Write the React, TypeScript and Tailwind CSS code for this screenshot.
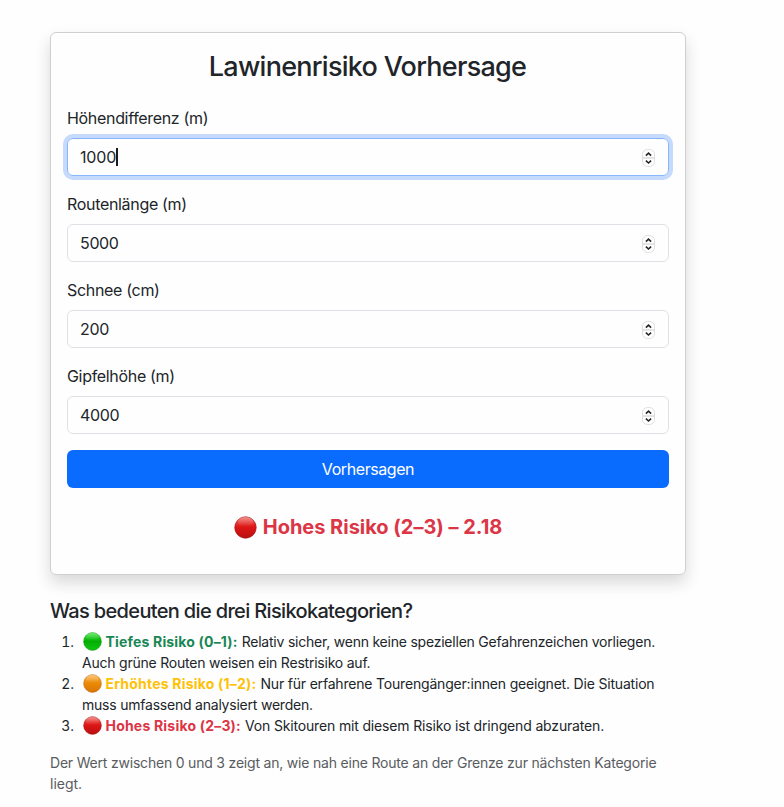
type Tone = "green" | "orange" | "red";

const ballColors: Record<Tone, [string, string, string, string]> = {
  green: ["#35e835", "#04ae04", "#10c810", "#078a07"],
  orange: ["#f9b04a", "#ea8a05", "#d87404", "#b86507"],
  red: ["#f0605a", "#dc1515", "#b80f0f", "#9c1414"],
};

function Ball({ tone, className }: { tone: Tone; className: string }) {
  const [top, mid, low, edge] = ballColors[tone];
  const id = `ball-${tone}`;
  return (
    <svg viewBox="0 0 22 22" className={className} aria-hidden="true">
      <defs>
        <linearGradient id={id} x1="0" y1="0" x2="0" y2="1">
          <stop offset="0" stopColor={top} />
          <stop offset="0.5" stopColor={mid} />
          <stop offset="1" stopColor={low} />
        </linearGradient>
        <linearGradient id={`${id}-shine`} x1="0" y1="0" x2="0" y2="1">
          <stop offset="0" stopColor="#fff" stopOpacity="0.3" />
          <stop offset="1" stopColor="#fff" stopOpacity="0" />
        </linearGradient>
      </defs>
      <circle cx="11" cy="11" r="10.3" fill={`url(#${id})`} stroke={edge} strokeWidth="0.7" strokeOpacity="0.8" />
      <ellipse cx="11" cy="5.4" rx="7.6" ry="4.4" fill={`url(#${id}-shine)`} />
    </svg>
  );
}

function Stepper() {
  return (
    <svg viewBox="0 0 13 18" className="mt-0.5 h-[18px] w-[13px]" fill="none" aria-hidden="true">
      <rect x="0.5" y="0.5" width="12" height="17" rx="5" fill="#fff" stroke="#dedede" />
      <path d="M0.5 9h12" stroke="#dedede" strokeWidth="1.6" />
      <path d="M3.9 6.6 6.5 4.2l2.6 2.4M3.9 11.6l2.6 2.4 2.6-2.4" stroke="#262626" strokeWidth="1.6" />
    </svg>
  );
}

const fields = [
  { label: "Höhendifferenz (m)", value: "1000", valueClass: "tracking-[-0.15px]", focused: true },
  { label: "Routenlänge (m)", value: "5000", valueClass: "tracking-[-0.35px]", focused: false },
  { label: "Schnee (cm)", value: "200", valueClass: "tracking-[-0.35px]", focused: false },
  { label: "Gipfelhöhe (m)", value: "4000", valueClass: "tracking-[-0.35px]", focused: false },
];

type Category = {
  tone: Tone;
  color: string;
  name: string;
  nameClass: string;
  first: string;
  firstClass: string;
  second?: string;
};

const categories: Category[] = [
  {
    tone: "green",
    color: "text-[#198754]",
    name: "Tiefes Risiko (0–1):",
    nameClass: "tracking-[0.18px]",
    first: "Relativ sicher, wenn keine speziellen Gefahrenzeichen vorliegen.",
    firstClass: "tracking-[-0.22px]",
    second: "Auch grüne Routen weisen ein Restrisiko auf.",
  },
  {
    tone: "orange",
    color: "text-[#ffc107]",
    name: "Erhöhtes Risiko (1–2):",
    nameClass: "tracking-[0.21px]",
    first: "Nur für erfahrene Tourengänger:innen geeignet. Die Situation",
    firstClass: "tracking-[-0.19px]",
    second: "muss umfassend analysiert werden.",
  },
  {
    tone: "red",
    color: "text-[#dc3545]",
    name: "Hohes Risiko (2–3):",
    nameClass: "tracking-[0.2px]",
    first: "Von Skitouren mit diesem Risiko ist dringend abzuraten.",
    firstClass: "tracking-[-0.16px]",
  },
];

export default function App() {
  return (
    <div className="h-[807px] w-[784px] overflow-hidden bg-[#fefefe] pl-[50px] pt-8 font-['Inter',sans-serif] text-base text-[#212529]">
      <main className="w-[636px]">
        <section className="h-[543px] rounded-md border border-[#cfcfcf] bg-[#fefefe] p-4 shadow-[0_8px_16px_rgba(0,0,0,0.15)]">
          <h1 className="mb-[22px] whitespace-nowrap pr-px text-center text-[27px] font-medium leading-[35px] tracking-[-0.73px]">
            Lawinenrisiko Vorhersage
          </h1>
          {fields.map((f) => (
            <div key={f.label} className="mb-4">
              <div className="mb-2 h-6 whitespace-nowrap leading-6 tracking-[-0.32px]">{f.label}</div>
              <div
                className={`flex h-[38px] items-center justify-between rounded-md border pl-3 pr-[13px] ${
                  f.focused ? "border-[#86b7fe] shadow-[0_0_0_4px_#c5dafc]" : "border-[#dee2e6]"
                }`}
              >
                <span className={`flex items-center ${f.valueClass}`}>
                  {f.value}
                  {f.focused && <span className="h-[18px] w-[2px] bg-[#1a1a1a]" />}
                </span>
                <Stepper />
              </div>
            </div>
          ))}
          <button className="flex h-[38px] w-full items-center justify-center rounded-md bg-[#0a6cff] tracking-[-0.42px] text-white">
            Vorhersagen
          </button>
          <div className="mt-[27px] flex h-6 items-center justify-center whitespace-nowrap text-xl font-bold leading-6 tracking-[-0.02px] text-[#dc3545]">
            <Ball tone="red" className="mr-[6px] size-[23px]" />
            Hohes Risiko (2–3) – 2.18
          </div>
        </section>

        <h2 className="mt-6 whitespace-nowrap text-xl font-medium leading-6 tracking-[-0.66px]">
          Was bedeuten die drei Risikokategorien?
        </h2>
        <ol className="mt-2 text-sm leading-[21px]">
          {categories.map((c, i) => (
            <li key={c.name} className="flex whitespace-nowrap">
              <span className="w-8 pr-2 text-right tabular-nums">{i + 1}.</span>
              <div>
                <div className="flex h-[21px] items-center">
                  <Ball tone={c.tone} className="ml-[0.5px] mr-1 size-[19px]" />
                  <strong className={`mr-1 font-bold ${c.color} ${c.nameClass}`}>{c.name}</strong>
                  <span className={c.firstClass}>{c.first}</span>
                </div>
                {c.second && <div className="tracking-[-0.22px]">{c.second}</div>}
              </div>
            </li>
          ))}
        </ol>
        <p className="mt-4 whitespace-nowrap text-sm leading-[21px] text-[#595c5f]">
          <span className="tracking-[-0.2px]">Der Wert zwischen 0 und 3 zeigt an, wie nah eine Route an der Grenze zur nächsten Kategorie</span>
          <br />
          liegt.
        </p>
      </main>
    </div>
  );
}
